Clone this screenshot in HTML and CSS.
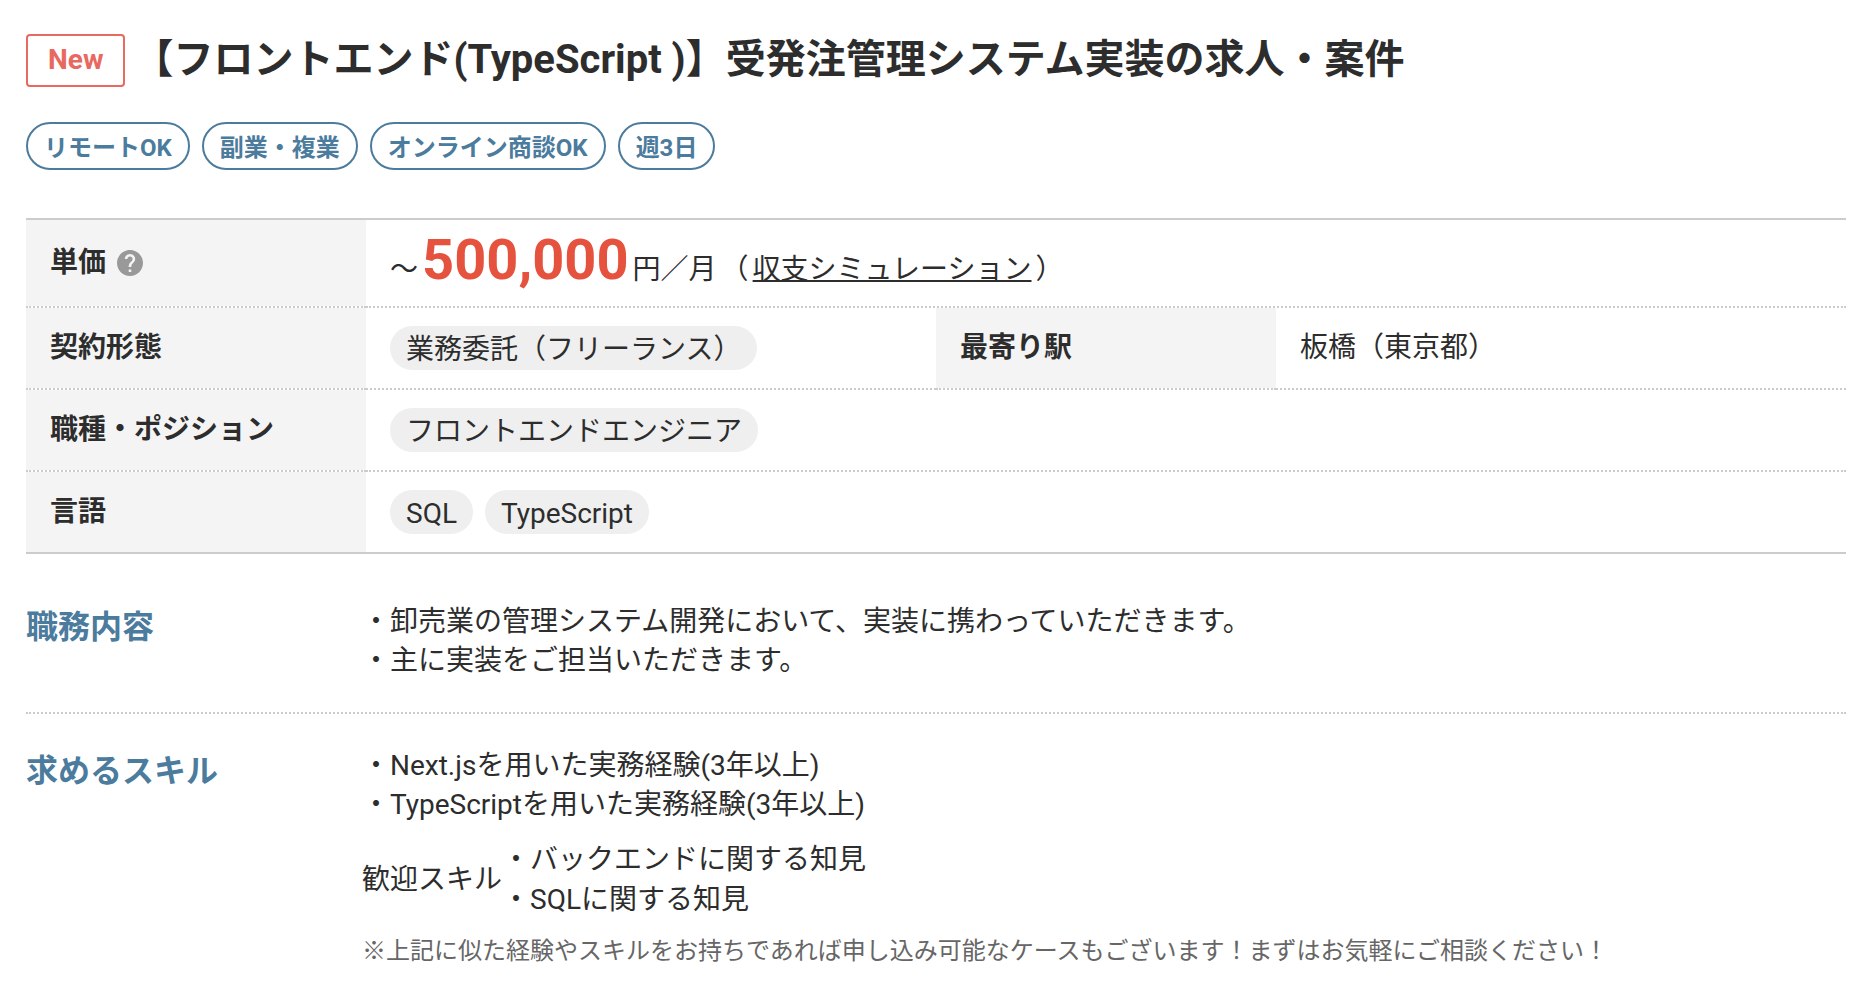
FILE: index.html
```html
<!DOCTYPE html>
<html lang="ja">
  <head>
    <meta charset="UTF-8" />
    <meta name="viewport" content="width=device-width, initial-scale=1.0" />
    <link rel="stylesheet" href="styles.css">
    <title>【フロントエンド(TypeScript )】受発注管理システム実装の求人・案件</title>
  </head>
  <body>
    <main class="job">
      <header class="job-header">
        <span class="badge-new">New</span>
        <h1 class="job-title">【フロントエンド(TypeScript )】受発注管理システム実装の求人・案件</h1>
      </header>

      <ul class="tags">
        <li class="tag">リモートOK</li>
        <li class="tag">副業・複業</li>
        <li class="tag">オンライン商談OK</li>
        <li class="tag">週3日</li>
      </ul>

      <table class="summary">
        <colgroup>
          <col class="col-label" />
          <col class="col-value" />
          <col class="col-label" />
          <col class="col-value" />
        </colgroup>
        <tr class="row-price">
          <th scope="row">
            <div class="label">
              単価
              <button type="button" class="help" aria-label="単価について">
                <svg viewBox="2 2 20 20" width="26" height="26" aria-hidden="true">
                  <path fill="#999" d="M12 2C6.48 2 2 6.48 2 12s4.48 10 10 10 10-4.48 10-10S17.52 2 12 2zm1 17h-2v-2h2v2zm2.07-7.75-.9.92C13.45 12.9 13 13.5 13 15h-2v-.5c0-1.1.45-2.1 1.17-2.83l1.24-1.26c.37-.36.59-.86.59-1.41 0-1.1-.9-2-2-2s-2 .9-2 2H8c0-2.21 1.79-4 4-4s4 1.79 4 4c0 .88-.36 1.68-.93 2.25z"/>
                </svg>
              </button>
            </div>
          </th>
          <td colspan="3">〜<span class="price">500,000</span>円／月<span class="simulation">（<a href="#">収支シミュレーション</a>）</span></td>
        </tr>
        <tr>
          <th scope="row">契約形態</th>
          <td>
            <ul class="pills">
              <li class="pill">業務委託（フリーランス）</li>
            </ul>
          </td>
          <th scope="row">最寄り駅</th>
          <td>板橋（東京都）</td>
        </tr>
        <tr>
          <th scope="row">職種・ポジション</th>
          <td colspan="3">
            <ul class="pills">
              <li class="pill">フロントエンドエンジニア</li>
            </ul>
          </td>
        </tr>
        <tr>
          <th scope="row">言語</th>
          <td colspan="3">
            <ul class="pills">
              <li class="pill">SQL</li>
              <li class="pill">TypeScript</li>
            </ul>
          </td>
        </tr>
      </table>

      <section class="detail">
        <h2 class="detail-title">職務内容</h2>
        <div class="detail-body">
          <p>・卸売業の管理システム開発において、実装に携わっていただきます。<br />・主に実装をご担当いただきます。</p>
        </div>
      </section>

      <section class="detail">
        <h2 class="detail-title">求めるスキル</h2>
        <div class="detail-body">
          <p>・Next.jsを用いた実務経験(3年以上)<br />・TypeScriptを用いた実務経験(3年以上)</p>
          <dl class="welcome">
            <dt>歓迎スキル</dt>
            <dd>・バックエンドに関する知見<br />・SQLに関する知見</dd>
          </dl>
          <p class="note">※上記に似た経験やスキルをお持ちであれば申し込み可能なケースもございます！まずはお気軽にご相談ください！</p>
        </div>
      </section>
    </main>
  </body>
</html>
```
FILE: styles.css
```css
* {
  box-sizing: border-box;
}
body {
  margin: 0;
  font-family: Roboto, 'Noto Sans CJK JP', sans-serif;
  font-size: 28px;
  line-height: 1.4;
  color: #2d2d2d;
  background: #fff;
}
h1,
h2,
p,
ul,
dl,
dd {
  margin: 0;
  padding: 0;
}
ul {
  list-style: none;
}

.job {
  padding: 30px 30px 30px 26px;
}

/* title */
.job-header {
  display: flex;
  align-items: flex-start;
  gap: 8px;
}
.badge-new {
  flex: none;
  margin-top: 4px;
  padding: 0 20px 2px;
  border: 2px solid #e8695f;
  border-radius: 4px;
  color: #e8695f;
  font-size: 28px;
  font-weight: bold;
  line-height: 47px;
}
.job-title {
  font-size: 40px;
  font-weight: bold;
  line-height: 60px;
}

.tags {
  display: flex;
  flex-wrap: wrap;
  gap: 12px;
  margin: 32px 0 48px;
}
.tag {
  padding: 4px 16px 0;
  border: 2px solid #4b7b9d;
  border-radius: 24px;
  color: #4b7b9d;
  font-size: 24px;
  font-weight: bold;
  line-height: 40px;
}

/* summary table */
.summary {
  width: 100%;
  table-layout: fixed;
  border-spacing: 0;
  border-top: 2px solid #ccc;
  border-bottom: 2px solid #ccc;
}
.col-label {
  width: 340px;
}
.summary th,
.summary td {
  height: 82px;
  padding: 0 24px;
  border-bottom: 2px dotted #ccc;
  text-align: left;
  vertical-align: middle;
}
.summary th {
  background: #f4f4f4;
  background-clip: padding-box;
}
.summary .row-price th,
.summary .row-price td {
  height: 88px;
}
.summary .row-price td {
  padding-bottom: 4px;
}
.summary tr:last-child th,
.summary tr:last-child td {
  height: 80px;
  border-bottom: none;
}
.label {
  display: flex;
  align-items: center;
  gap: 11px;
}
.help {
  display: flex;
  padding: 0;
  border: none;
  background: none;
  cursor: pointer;
}
.price {
  margin: 0 4px;
  color: #e5533f;
  font-size: 56px;
  font-weight: bold;
  line-height: 1;
}
.simulation {
  margin-left: 4px;
}
.simulation a {
  margin: 0 4px;
  color: inherit;
  text-decoration-thickness: 2px;
}

.pills {
  display: flex;
  flex-wrap: wrap;
  gap: 12px;
}
.pill {
  padding: 4px 16px 0;
  border-radius: 22px;
  background: #efefef;
  line-height: 40px;
}

/* details */
.summary + .detail {
  margin-top: 16px;
}
.detail {
  display: flex;
  padding: 32px 0;
}
.detail + .detail {
  border-top: 2px dotted #ccc;
}
.detail-title {
  flex: none;
  width: 336px;
  color: #4b7b9d;
  font-size: 32px;
  line-height: 50px;
}
.detail-body {
  flex: 1;
}
.detail-body p {
  line-height: 39px;
}
.welcome {
  display: flex;
  align-items: center;
  margin: 16px 0 12px;
  line-height: 40px;
}
.detail-body .note {
  color: #666;
  font-size: 24px;
}
```
